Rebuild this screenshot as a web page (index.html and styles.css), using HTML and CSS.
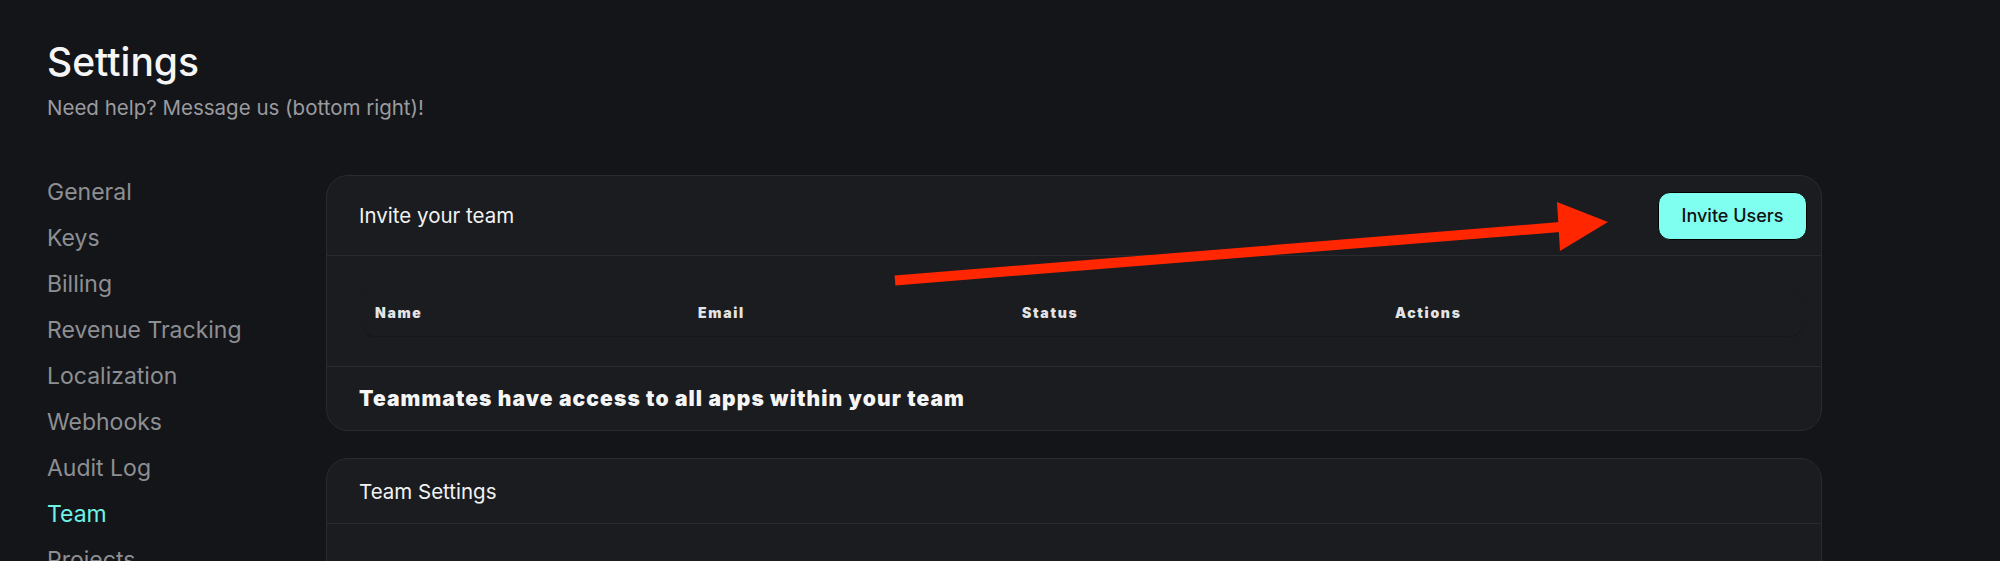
FILE: index.html
```html
<!DOCTYPE html>
<html lang="en">
<head>
  <meta charset="UTF-8">
  <title>Settings - Team</title>
  <link rel="stylesheet" href="styles.css">
</head>
<body>

  <div class="page">
    <header class="page-head">
      <h1>Settings</h1>
      <p>Need help? Message us (bottom right)!</p>
    </header>

    <div class="layout">
      <nav class="side-nav">
        <a href="#">General</a>
        <a href="#">Keys</a>
        <a href="#">Billing</a>
        <a href="#">Revenue Tracking</a>
        <a href="#">Localization</a>
        <a href="#">Webhooks</a>
        <a href="#">Audit Log</a>
        <a href="#" class="active">Team</a>
        <a href="#">Projects</a>
      </nav>

      <main class="content">
        <section class="card">
          <div class="card-head">
            <span>Invite your team</span>
            <button class="invite-btn">Invite Users</button>
          </div>

          <div class="table-wrap">
            <div class="table-head">
              <div>Name</div>
              <div>Email</div>
              <div>Status</div>
              <div>Actions</div>
            </div>
          </div>

          <div class="card-foot">Teammates have access to all apps within your team</div>
        </section>

        <section class="card">
          <div class="card-head short">
            <span>Team Settings</span>
          </div>
          <div class="card-body"></div>
        </section>
      </main>
    </div>

    <!-- annotation arrow drawn over the page -->
    <svg class="arrow" width="2000" height="561" viewBox="0 0 2000 561">
      <line x1="895" y1="280.5" x2="1560" y2="227" stroke="#ff2600" stroke-width="10"/>
      <polygon points="1557,202 1608,222 1560,251" fill="#ff2600"/>
    </svg>
  </div>

</body>
</html>
```

FILE: styles.css
```css
body {
  margin: 0;
  font-family: Inter, "Noto Sans", sans-serif;
  background-color: #141519;
  color: #f2f2f2;
  height: 100vh;
  overflow: hidden;
}

.page {
  position: relative;
  padding: 38px 0 0 47px;
}

.page-head h1 {
  margin: 0;
  font-size: 39px;
  line-height: 48px;
  font-weight: 500;
  color: #f5f5f5;
}

.page-head p {
  margin: 8px 0 0;
  font-size: 20.5px;
  line-height: 28px;
  color: #9a9b9f;
}

.layout {
  display: flex;
  margin-top: 47px;
}

.side-nav {
  width: 279px;
  display: flex;
  flex-direction: column;
}

.side-nav a {
  font-size: 23px;
  line-height: 46px;
  color: #8d8f93;
  text-decoration: none;
}

.side-nav a.active {
  color: #6cf3e6;
}

.content {
  width: 1496px;
  padding-top: 6px;
}

.card {
  background-color: #1a1c20;
  border: 1px solid #292b2f;
  border-radius: 22px;
  margin-bottom: 27px;
}

.card-head {
  height: 79px;
  display: flex;
  justify-content: space-between;
  align-items: center;
  padding: 0 14px 0 32px;
  border-bottom: 1px solid #292b2f;
  font-size: 20.5px;
  color: #f2f2f2;
}

.card-head.short {
  height: 64px;
}

.invite-btn {
  width: 149px;
  height: 48px;
  background-color: #7ffff0;
  border: 1px solid #000;
  border-radius: 12px;
  font-family: Inter, sans-serif;
  font-size: 18px;
  font-weight: 500;
  color: #111;
  cursor: pointer;
}

.table-wrap {
  padding: 32px 19px 30px 36px;
  border-bottom: 1px solid #292b2f;
}

.table-head {
  height: 48px;
  display: grid;
  grid-template-columns: 323px 324px 373px 1fr;
  align-items: center;
  padding-left: 12px;
  background-color: #1a1c1f;
  border-radius: 12px;
  box-shadow: 0 1px 1px rgba(0, 0, 0, 0.18);
  font-size: 14px;
  font-weight: 900;
  letter-spacing: 0.12em;
  color: #e4e4e6;
}

.card-foot {
  height: 63px;
  box-sizing: border-box;
  padding: 18px 32px 0;
  font-size: 21px;
  line-height: 28px;
  font-weight: 900;
  letter-spacing: 1.1px;
  color: #f5f5f5;
}

.card-body {
  height: 200px;
}

.arrow {
  position: absolute;
  top: 0;
  left: 0;
  pointer-events: none;
}
```
